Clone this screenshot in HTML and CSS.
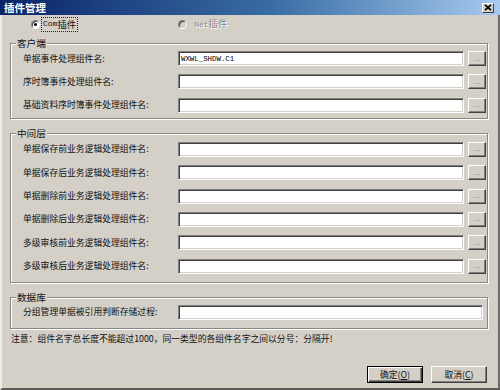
FILE: index.html
```html
<!DOCTYPE html>
<html lang="zh-CN">
<head>
<meta charset="utf-8">
<title>插件管理</title>
<link rel="stylesheet" href="styles.css">
</head>
<body>
<div class="window">
  <div class="titlebar">
    <span class="title">插件管理</span>
    <span class="close"><svg width="8" height="7" viewBox="0 0 8 7"><path d="M1 0.8L7 6.2M7 0.8L1 6.2" stroke="#000" stroke-width="1.7" fill="none"/></svg></span>
  </div>
  <div class="body">
    <div class="radios">
      <div class="radio"><span class="dot checked"></span><span class="focus"><span class="latin">Com</span>插件</span></div>
      <div class="radio disabled"><span class="dot"></span><span class="rtext"><span class="latin">Net</span>插件</span></div>
    </div>

    <fieldset class="group g1">
      <legend>客户端</legend>
      <div class="rows">
        <span class="lbl">单据事件处理组件名:</span><span class="input"><span class="val">WXWL_SHDW.C1</span></span><span class="bsm">...</span>
        <span class="lbl">序时簿事件处理组件名:</span><span class="input"></span><span class="bsm">...</span>
        <span class="lbl">基础资料序时簿事件处理组件名:</span><span class="input"></span><span class="bsm">...</span>
      </div>
    </fieldset>

    <fieldset class="group g2">
      <legend>中间层</legend>
      <div class="rows">
        <span class="lbl">单据保存前业务逻辑处理组件名:</span><span class="input"></span><span class="bsm">...</span>
        <span class="lbl">单据保存后业务逻辑处理组件名:</span><span class="input"></span><span class="bsm">...</span>
        <span class="lbl">单据删除前业务逻辑处理组件名:</span><span class="input"></span><span class="bsm">...</span>
        <span class="lbl">单据删除后业务逻辑处理组件名:</span><span class="input"></span><span class="bsm">...</span>
        <span class="lbl">多级审核前业务逻辑处理组件名:</span><span class="input"></span><span class="bsm">...</span>
        <span class="lbl">多级审核后业务逻辑处理组件名:</span><span class="input"></span><span class="bsm">...</span>
      </div>
    </fieldset>

    <fieldset class="group g3">
      <legend>数据库</legend>
      <div class="rows">
        <span class="lbl">分组管理单据被引用判断存储过程:</span><span class="input wide"></span>
      </div>
    </fieldset>

    <p class="note">注意：组件名字总长度不能超过1000，同一类型的各组件名字之间以分号：分隔开!</p>

    <div class="footer">
      <span class="btn default">确定(<u>O</u>)</span>
      <span class="btn">取消(<u>C</u>)</span>
    </div>
  </div>
</div>
</body>
</html>
```
FILE: styles.css
```css
* { box-sizing: border-box; }
html, body { margin: 0; padding: 0; }
body {
  width: 500px;
  height: 390px;
  overflow: hidden;
  background: #d4d0c8;
  font-family: "Noto Sans CJK SC", "Liberation Sans", sans-serif;
  font-size: 8.8px;
  color: #111;
}
.window {
  width: 500px;
  height: 390px;
  display: flex;
  flex-direction: column;
  background: #d4d0c8;
}
.titlebar {
  height: 15px;
  flex: none;
  display: flex;
  align-items: center;
  justify-content: space-between;
  padding: 0 6px 0 4px;
  background: linear-gradient(to right, #0a246a, #3a6ea5 55%, #a6caf0);
}
.title {
  color: #fff;
  font-weight: bold;
  font-size: 10.5px;
  line-height: 15px;
}
.close {
  width: 12px;
  height: 10px;
  background: #d4d0c8;
  border: 1px solid;
  border-color: #fff #404040 #404040 #fff;
  display: flex;
  align-items: center;
  justify-content: center;
}
.body {
  flex: 1;
  display: flex;
  flex-direction: column;
  border-left: 2px solid #eeece6;
  border-right: 2px solid #6e6c68;
  border-bottom: 2px solid #5c5a56;
  padding: 0 10px 5px 8px;
}
.radios {
  height: 18px;
  display: flex;
  align-items: center;
  padding-left: 21px;
}
.radio {
  display: flex;
  align-items: center;
  gap: 2px;
  line-height: 12px;
  font-size: 9.4px;
}
.radio.disabled { margin-left: 101px; gap: 7px; }
.dot {
  width: 9px;
  height: 9px;
  border-radius: 50%;
  background: #fff;
  border: 1px solid;
  border-color: #808080 #fff #fff #808080;
  box-shadow: inset 1px 1px 0 #404040;
  position: relative;
}
.dot.checked::after {
  content: "";
  position: absolute;
  left: 2px;
  top: 2px;
  width: 3px;
  height: 3px;
  border-radius: 50%;
  background: #000;
}
.disabled .dot { background: #d4d0c8; }
.focus {
  outline: 1px dotted #222;
  padding: 0 1px;
  height: 13px;
  display: flex;
  align-items: center;
}
.latin {
  font-family: "Liberation Mono", monospace;
  font-size: 8px;
}
.disabled .rtext {
  color: #8a8884;
  text-shadow: 1px 1px 0 #fff;
}
.group {
  margin: 0;
  padding: 0;
  min-width: 0;
  border: 1px solid #8a8882;
  box-shadow: 1px 1px 0 #fff, inset 1px 1px 0 #fff;
}
.group legend {
  margin-left: 5px;
  padding: 0 1px;
  height: 11px;
  line-height: 11px;
  font-size: 9.6px;
  background: #d4d0c8;
}
.g1 { margin-top: 5px; }
.g2 { margin-top: 9px; }
.g3 { margin-top: 9px; }
.rows {
  display: grid;
  grid-template-columns: 151px 286px 18px;
  column-gap: 4px;
  row-gap: 8.4px;
  align-items: center;
  padding: 2px 0 5px 12px;
}
.g2 .rows { padding: 3px 0 8px 12px; }
.g3 .rows { padding: 2px 0 8px 12px; }
.lbl {
  white-space: nowrap;
  line-height: 12px;
}
.input {
  height: 15px;
  background: #fff;
  border: 1px solid;
  border-color: #808080 #fff #fff #808080;
  box-shadow: inset 1px 1px 0 #404040, inset -1px -1px 0 #d4d0c8;
  display: flex;
  align-items: center;
  padding-left: 2px;
}
.input.wide {
  grid-column: 2 / span 2;
  width: 305px;
}
.val {
  font-family: "Liberation Mono", monospace;
  font-size: 7.4px;
  color: #000;
  line-height: 10px;
}
.bsm {
  height: 15px;
  border: 1px solid;
  border-color: #fff #404040 #404040 #fff;
  box-shadow: inset -1px -1px 0 #808080;
  display: flex;
  align-items: center;
  justify-content: center;
  font-family: "Liberation Sans", sans-serif;
  font-size: 8px;
  color: #7a7874;
  letter-spacing: 0.5px;
  line-height: 8px;
}
.note {
  margin: 4px 0 0 1px;
  line-height: 12px;
  white-space: nowrap;
}
.footer {
  margin-top: auto;
  display: flex;
  justify-content: flex-end;
  gap: 8px;
  padding-right: 1px;
}
.btn {
  width: 56px;
  height: 17px;
  border: 1px solid;
  border-color: #fff #404040 #404040 #fff;
  box-shadow: inset -1px -1px 0 #808080;
  display: flex;
  align-items: center;
  justify-content: center;
  font-size: 8.8px;
  line-height: 12px;
}
.btn.default {
  border-color: #000;
  box-shadow: inset 1px 1px 0 #fff, inset -1px -1px 0 #404040, inset -2px -2px 0 #808080;
}
.btn u { text-decoration: underline; text-underline-offset: 1px; }
```
